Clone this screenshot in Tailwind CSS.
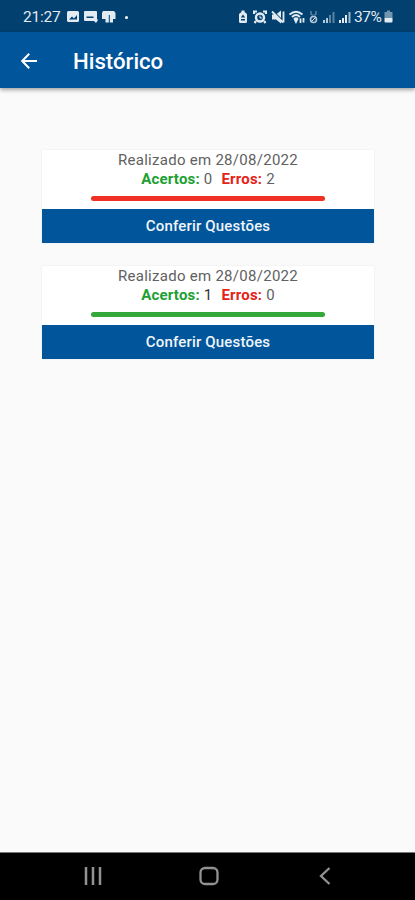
<!DOCTYPE html>
<html lang="pt-BR">
<head>
  <meta charset="UTF-8" />
  <meta name="viewport" content="width=device-width, initial-scale=1" />
  <title>Histórico</title>
  <script src="https://cdn.jsdelivr.net/npm/@tailwindcss/browser@4"></script>
</head>
<body class="flex flex-col h-[900px] bg-[#fafafa] font-['Roboto',sans-serif] overflow-hidden">
  <!-- barra de status -->
  <div class="h-8 shrink-0 bg-[#01406f] flex items-center pt-0.5 pl-[23px] pr-[22px] text-[#e3ebf2]">
    <span class="w-[38px] pt-0.5 text-[15.5px] leading-none tracking-[-0.2px] whitespace-nowrap">21:27</span>
    <svg class="ml-[5px]" width="14" height="14" viewBox="0 0 14 14" fill="currentColor" fill-rule="evenodd">
      <path d="M2.500 1h9A1.500 1.500 0 0 1 13 2.500v8a1.500 1.500 0 0 1-1.500 1.500h-9A1.500 1.500 0 0 1 1 10.500v-8A1.500 1.500 0 0 1 2.500 1zM3 9.500h8V5L8 8.500 6 6.500z" />
    </svg>
    <svg class="ml-[3px]" width="16" height="14" viewBox="0 0 16 14" fill="currentColor" fill-rule="evenodd">
      <path d="M2 1h11a1 1 0 0 1 1 1v7l1 1-2 3-2-2H2a1 1 0 0 1-1-1V2a1 1 0 0 1 1-1zM3.500 6.500v1.500h7V6.500z" />
    </svg>
    <svg class="ml-[2px]" width="15" height="14" viewBox="0 0 15 14" fill="currentColor">
      <path d="M2 1h11l1.500 2v6H12v3.500H8.800V5h-1v7.500H4.500V9H1V3z" />
    </svg>
    <span class="ml-[9px] size-[3px] rounded-full bg-white"></span>

    <div class="ml-auto flex items-center">
      <svg class="mr-[5px]" width="10" height="14" viewBox="0 0 10 14" fill="currentColor" fill-rule="evenodd">
        <path d="M3.500 0.500h3V2L9 4v7.500a1.500 1.500 0 0 1-1.500 1.500h-5A1.500 1.500 0 0 1 1 11.500V4l2.500-2zM5 4.500L2.800 7.500h4.400zM3 9v1.500h4V9z" />
      </svg>
      <svg class="mr-[4px]" width="14" height="14" viewBox="0 0 14 14" fill="none" stroke="currentColor">
        <circle cx="7" cy="7.500" r="4" stroke-width="2.400" />
        <path d="M1 4V1.500h3M13 4V1.500h-3M3 11l-1.500 2M11 11l1.500 2" stroke-width="2.200" />
        <path d="M7 5.500v2.500h2" />
      </svg>
      <svg class="mr-[4px]" width="14" height="14" viewBox="0 0 14 14" fill="none" stroke="currentColor">
        <path d="M1 4.500h4l5-4v13L5 9.500H1z" fill="currentColor" stroke="none" />
        <path d="M2 1l12 12" stroke="#01406f" stroke-width="1.500" />
        <path d="M1 1.500l11 11M12.500 1.500v11" stroke-width="1.800" />
      </svg>
      <svg class="mr-[4px]" width="16" height="14" viewBox="0 0 16 14" fill="none" stroke="currentColor" stroke-width="1.800">
        <path d="M.5 4.500q6.500-5.500 13 0M3 7q4-4 8 0M5 9q2-1.800 4 0" />
        <path d="M7 12l-1-2h2zM11.500 8.500v4.500M14.500 12.500V8" />
      </svg>
      <svg class="mr-[4px]" width="9" height="14" viewBox="0 0 9 14" fill="none" stroke="currentColor">
        <path d="M2 1v3l2 1.500M7 1v3L5 5.500" stroke-width="1.500" opacity=".4" />
        <circle cx="4.500" cy="9.500" r="3" stroke-width="1.600" opacity=".8" />
        <path d="M2.500 11.500l4-4" />
      </svg>
      <svg class="mr-[3px]" width="13" height="14" viewBox="0 0 13 14" fill="currentColor">
        <path d="M1 10h2v3H1zM4 8h2v5H4z" opacity=".8" />
        <path d="M7 5h2v8H7zM10.500 2h2v11h-2z" opacity=".4" />
      </svg>
      <svg class="mr-[3px]" width="13" height="14" viewBox="0 0 13 14" fill="currentColor">
        <path d="M1 10h2v3H1zM4 8h2v5H4zM7 5h2v8H7z" />
        <path d="M10.500 2h2v11h-2z" opacity=".7" />
      </svg>
      <span class="w-[29px] pt-0.5 text-[15.5px] leading-none tracking-[-0.4px] whitespace-nowrap">37%</span>
      <svg class="ml-[1px]" width="9" height="14" viewBox="0 0 9 14" fill="currentColor">
        <path d="M3 0.500h3V2h2.500v6h-8V2H3z" opacity=".5" />
        <path d="M.5 8h8v3.500a1 1 0 0 1-1 1h-6a1 1 0 0 1-1-1z" />
      </svg>
    </div>
  </div>

  <!-- cabeçalho -->
  <header class="relative h-14 shrink-0 bg-[#01559b] flex items-center pt-0.5 pl-[21px] text-white shadow-[0_2px_4px_rgba(0,0,0,0.35)]">
    <svg width="16" height="16" viewBox="0 0 16 16" fill="none" stroke="currentColor" stroke-width="2">
      <path d="M16 8H1.500M8.200 .8L1.200 8l7 7.200" />
    </svg>
    <h1 class="ml-9 text-[22.2px] font-medium leading-none">Histórico</h1>
  </header>

  <main class="flex-1 flex flex-col gap-[23px] pt-[62px] pl-[42px] pr-[41px] text-center">
    <section class="h-[93px] flex flex-col bg-white shadow-[0_0_2px_rgba(0,0,0,0.08)]">
      <div class="h-[59px] pt-px text-[15px] leading-[19px] text-[#616161]">
        <p class="tracking-[0.28px]">Realizado em 28/08/2022</p>
        <p class="flex justify-center gap-[9px] tracking-[0.2px]">
          <span><b class="text-[#20a032]">Acertos:</b> 0</span>
          <span><b class="text-[#e42218]">Erros:</b> 2</span>
        </p>
        <div class="mx-auto mt-[7px] w-[234px] h-[5px] rounded-full bg-[#ee3124]"></div>
      </div>
      <button class="h-[34px] bg-[#01559b] text-[#f0f5fa] text-[15px] tracking-[0.18px] font-medium">Conferir Questões</button>
    </section>

    <section class="h-[93px] flex flex-col bg-white shadow-[0_0_2px_rgba(0,0,0,0.08)]">
      <div class="h-[59px] pt-px text-[15px] leading-[19px] text-[#616161]">
        <p class="tracking-[0.28px]">Realizado em 28/08/2022</p>
        <p class="flex justify-center gap-[9px] tracking-[0.2px]">
          <span><b class="text-[#20a032]">Acertos:</b> <span class="text-[#333]">1</span></span>
          <span><b class="text-[#e42218]">Erros:</b> 0</span>
        </p>
        <div class="mx-auto mt-[7px] w-[234px] h-[5px] rounded-full bg-[#34a83a]"></div>
      </div>
      <button class="h-[34px] bg-[#01559b] text-[#f0f5fa] text-[15px] tracking-[0.18px] font-medium">Conferir Questões</button>
    </section>
  </main>

  <!-- navegação do sistema -->
  <nav class="h-12 shrink-0 bg-black border-t border-[#777] flex items-center justify-between pb-0.5 pl-[84px] pr-[84px] text-[#929292]">
    <svg width="18" height="18" viewBox="0 0 18 18" fill="none" stroke="currentColor" stroke-width="2.500">
      <path d="M2 0v18M9 0v18M16 0v18" />
    </svg>
    <svg class="-ml-1" width="20" height="20" viewBox="0 0 20 20" fill="none" stroke="currentColor" stroke-width="2.300">
      <rect x="1.500" y="2" width="17" height="16" rx="4.500" />
    </svg>
    <svg width="12" height="18" viewBox="0 0 12 18" fill="none" stroke="currentColor" stroke-width="2.300">
      <path d="M10.500 1L2 9l8.500 8" />
    </svg>
  </nav>
</body>
</html>
